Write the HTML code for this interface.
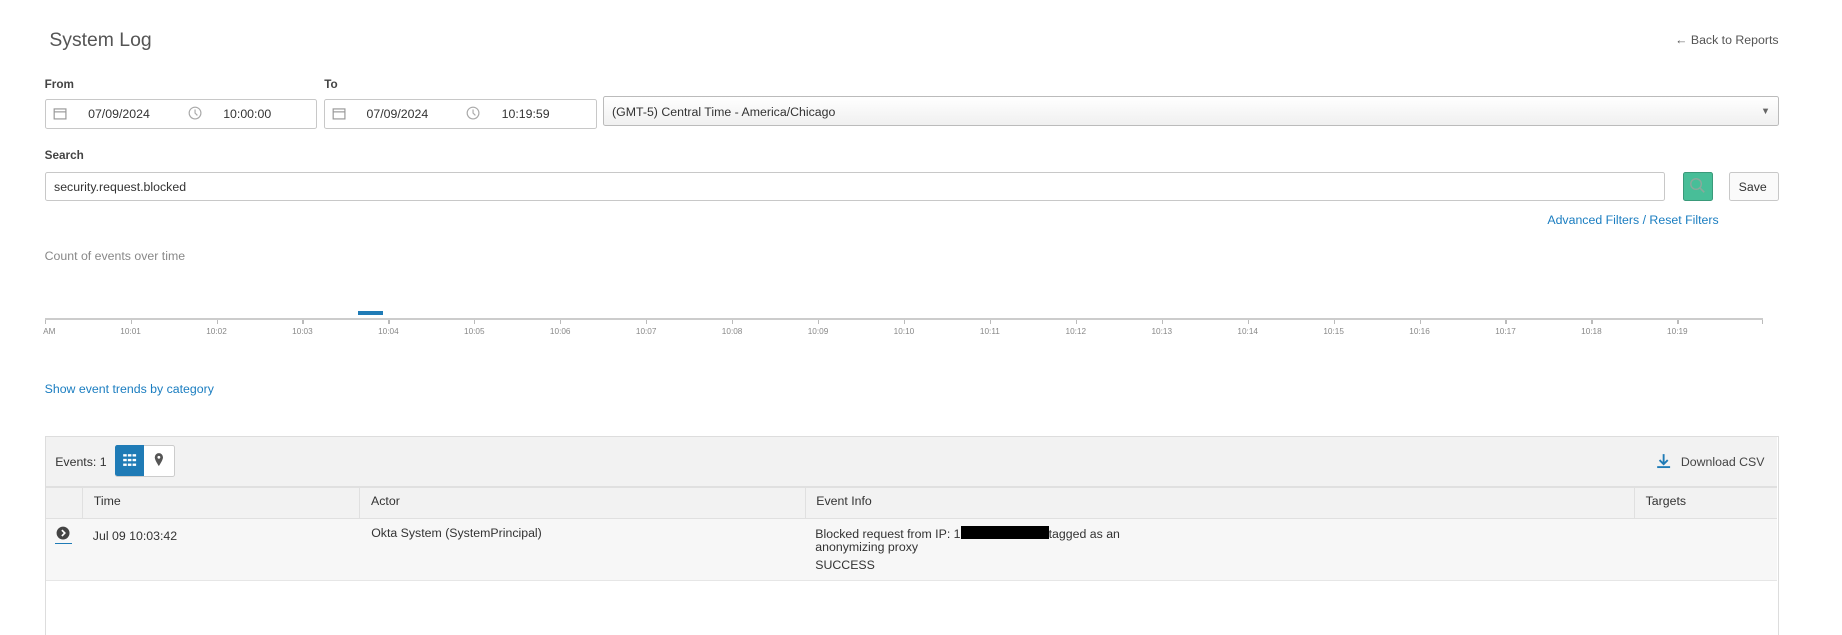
<!DOCTYPE html>
<html><head><meta charset="utf-8"><style>
html,body{margin:0;padding:0;background:#fff;overflow:hidden;width:1842px;height:635px}
#w{zoom:1.17474;width:1568px;height:541px;position:relative;font-family:"Liberation Sans",sans-serif;color:#333;font-size:10.5px}
.a{position:absolute;white-space:nowrap}
.box{position:absolute;border:1px solid #c8c8c8;border-radius:2px;background:#fff;box-sizing:border-box}
.lnk{color:#1a7dc0}
.tick{position:absolute;top:272px;width:1px;height:4px;background:#bbb}
.tl{position:absolute;top:278px;font-size:7px;color:#888;transform:translateX(-50%)}
.col{position:absolute;top:414px;height:27px;border-left:1px solid #e0e0e0;line-height:27px;padding-left:9px;box-sizing:border-box}
.lb{font-weight:bold;font-size:10px;color:#444}
</style></head><body><div id="w">
<div class="a" style="left:42px;top:25px;font-size:16.5px;color:#555">System Log</div>
<div class="a" style="right:54px;top:28px;color:#555">← Back to Reports</div>
<div class="a lb" style="left:38px;top:66px">From</div>
<div class="a lb" style="left:276px;top:66px">To</div>
<div class="box" style="left:38px;top:84px;width:232px;height:26px"></div>
<div class="box" style="left:276px;top:84px;width:232px;height:26px"></div>
<svg class="a" style="left:45px;top:90px" width="12" height="12"><rect x="1" y="2.5" width="10" height="8.5" fill="none" stroke="#999"/><line x1="1" y1="5" x2="11" y2="5" stroke="#999"/></svg>
<svg class="a" style="left:283px;top:90px" width="12" height="12"><rect x="1" y="2.5" width="10" height="8.5" fill="none" stroke="#999"/><line x1="1" y1="5" x2="11" y2="5" stroke="#999"/></svg>
<svg class="a" style="left:160px;top:90px" width="12" height="12"><circle cx="6" cy="6" r="5" fill="none" stroke="#aaa"/><path d="M6 3v3l2 2" fill="none" stroke="#aaa"/></svg>
<svg class="a" style="left:397px;top:90px" width="12" height="12"><circle cx="6" cy="6" r="5" fill="none" stroke="#aaa"/><path d="M6 3v3l2 2" fill="none" stroke="#aaa"/></svg>
<div class="a" style="left:75px;top:91px">07/09/2024</div>
<div class="a" style="left:190px;top:91px">10:00:00</div>
<div class="a" style="left:312px;top:91px">07/09/2024</div>
<div class="a" style="left:427px;top:91px">10:19:59</div>
<div class="box" style="left:513px;top:82px;width:1001px;height:25px;background:linear-gradient(#fff,#f0f0f0);border-color:#bbb"></div>
<div class="a" style="left:521px;top:89px">(GMT-5) Central Time - America/Chicago</div>
<div class="a" style="left:1499px;top:89px;font-size:8px;color:#666">▼</div>
<div class="a lb" style="left:38px;top:127px">Search</div>
<div class="box" style="left:38px;top:146px;width:1379px;height:25px"></div>
<div class="a" style="left:46px;top:153px">security.request.blocked</div>
<div class="box" style="left:1433px;top:146px;width:25px;height:25px;background:#48be98;border-color:#3a9a7a"></div>
<svg class="a" style="left:1438px;top:151px" width="15" height="15"><circle cx="6" cy="6" r="4.5" fill="none" stroke="#8aa99c" stroke-width="1.2"/><line x1="9.3" y1="9.3" x2="13" y2="13" stroke="#8aa99c" stroke-width="1.4"/></svg>
<div class="box" style="left:1472px;top:146px;width:42px;height:25px;background:#fafafa"></div>
<div class="a" style="left:1480px;top:153px">Save</div>
<div class="a lnk" style="right:105px;top:181px">Advanced Filters / Reset Filters</div>
<div class="a" style="left:38px;top:212px;color:#888">Count of events over time</div>
<div class="a" style="left:38px;top:271px;width:1463px;height:1px;background:#ccc"></div>
<div class="a" style="left:305px;top:265px;width:21px;height:3px;background:#1f7bb6"></div>
<div class="tl" style="left:42px">AM</div>
<div id="ticks"></div>
<div class="a lnk" style="left:38px;top:325px">Show event trends by category</div>
<div class="a" style="left:38px;top:371px;width:1476px;height:175px;border:1px solid #ddd;box-sizing:border-box;border-bottom:none"></div>
<div class="a" style="left:39px;top:372px;width:1474px;height:69px;background:#f2f2f2;border-bottom:1px solid #e0e0e0"></div>
<div class="a" style="left:39px;top:414px;width:1474px;height:1px;background:#e0e0e0"></div>
<div class="a" style="left:47px;top:387px">Events: 1</div>
<div class="a" style="left:98px;top:379px;width:49px;height:25px;border:1px solid #ccc;border-radius:2px;background:#fff"></div>
<div class="a" style="left:98px;top:379px;width:25px;height:26px;background:#1f7bb6;border-radius:2px 0 0 2px"></div>
<svg class="a" style="left:104px;top:386px" width="13" height="12"><g fill="#fff"><rect x="1" y="1" width="3" height="2"/><rect x="5" y="1" width="3" height="2"/><rect x="9" y="1" width="3" height="2"/><rect x="1" y="5" width="3" height="2"/><rect x="5" y="5" width="3" height="2"/><rect x="9" y="5" width="3" height="2"/><rect x="1" y="9" width="3" height="2"/><rect x="5" y="9" width="3" height="2"/><rect x="9" y="9" width="3" height="2"/></g></svg>
<svg class="a" style="left:130px;top:385px" width="10" height="14"><path d="M5 1a3.5 3.5 0 0 0-3.5 3.5C1.5 7 5 12 5 12s3.5-5 3.5-7.5A3.5 3.5 0 0 0 5 1z" fill="#555"/><circle cx="5" cy="4.5" r="1.2" fill="#fff"/></svg>
<svg class="a" style="left:1410px;top:386px" width="13" height="13"><path d="M6.5 1v8M3 6l3.5 3.5L10 6" fill="none" stroke="#1f7bb6" stroke-width="1.6"/><line x1="1" y1="12" x2="12" y2="12" stroke="#1f7bb6" stroke-width="1.6"/></svg>
<div class="a" style="right:66px;top:387px;color:#444">Download CSV</div>
<div class="col" style="left:70px;width:236px">Time</div>
<div class="col" style="left:306px;width:379px">Actor</div>
<div class="col" style="left:685px;width:706px">Event Info</div>
<div class="col" style="left:1391px;width:122px">Targets</div>
<div class="a" style="left:39px;top:442px;width:1474px;height:52px;background:#f7f7f7;border-bottom:1px solid #e6e6e6"></div>
<svg class="a" style="left:48px;top:448px" width="12" height="12"><circle cx="6" cy="6" r="5.5" fill="#444"/><path d="M5 3.5L7.5 6 5 8.5" fill="none" stroke="#fff" stroke-width="1.4"/></svg>
<div class="a" style="left:47px;top:462px;width:14px;height:1px;background:#1f7bb6"></div>
<div class="a" style="left:79px;top:450px">Jul 09 10:03:42</div>
<div class="a" style="left:316px;top:448px">Okta System (SystemPrincipal)</div>
<div class="a" style="left:694px;top:448px">Blocked request from IP: 1<span style="display:inline-block;width:75px;height:11px;background:#000;vertical-align:-1px"></span>tagged as an</div>
<div class="a" style="left:694px;top:460px">anonymizing proxy</div>
<div class="a" style="left:694px;top:475px">SUCCESS</div>
</div>
<script>
var t=document.getElementById('ticks'),h='';
h+='<div class="tick" style="left:38px"></div>';
for(var i=1;i<=19;i++){var x=38+i*73.15;h+='<div class="tick" style="left:'+x+'px"></div><div class="tl" style="left:'+x+'px">10:'+(i<10?'0':'')+i+'</div>';}
h+='<div class="tick" style="left:1500px"></div>';
t.innerHTML=h;
</script>
</body></html>
